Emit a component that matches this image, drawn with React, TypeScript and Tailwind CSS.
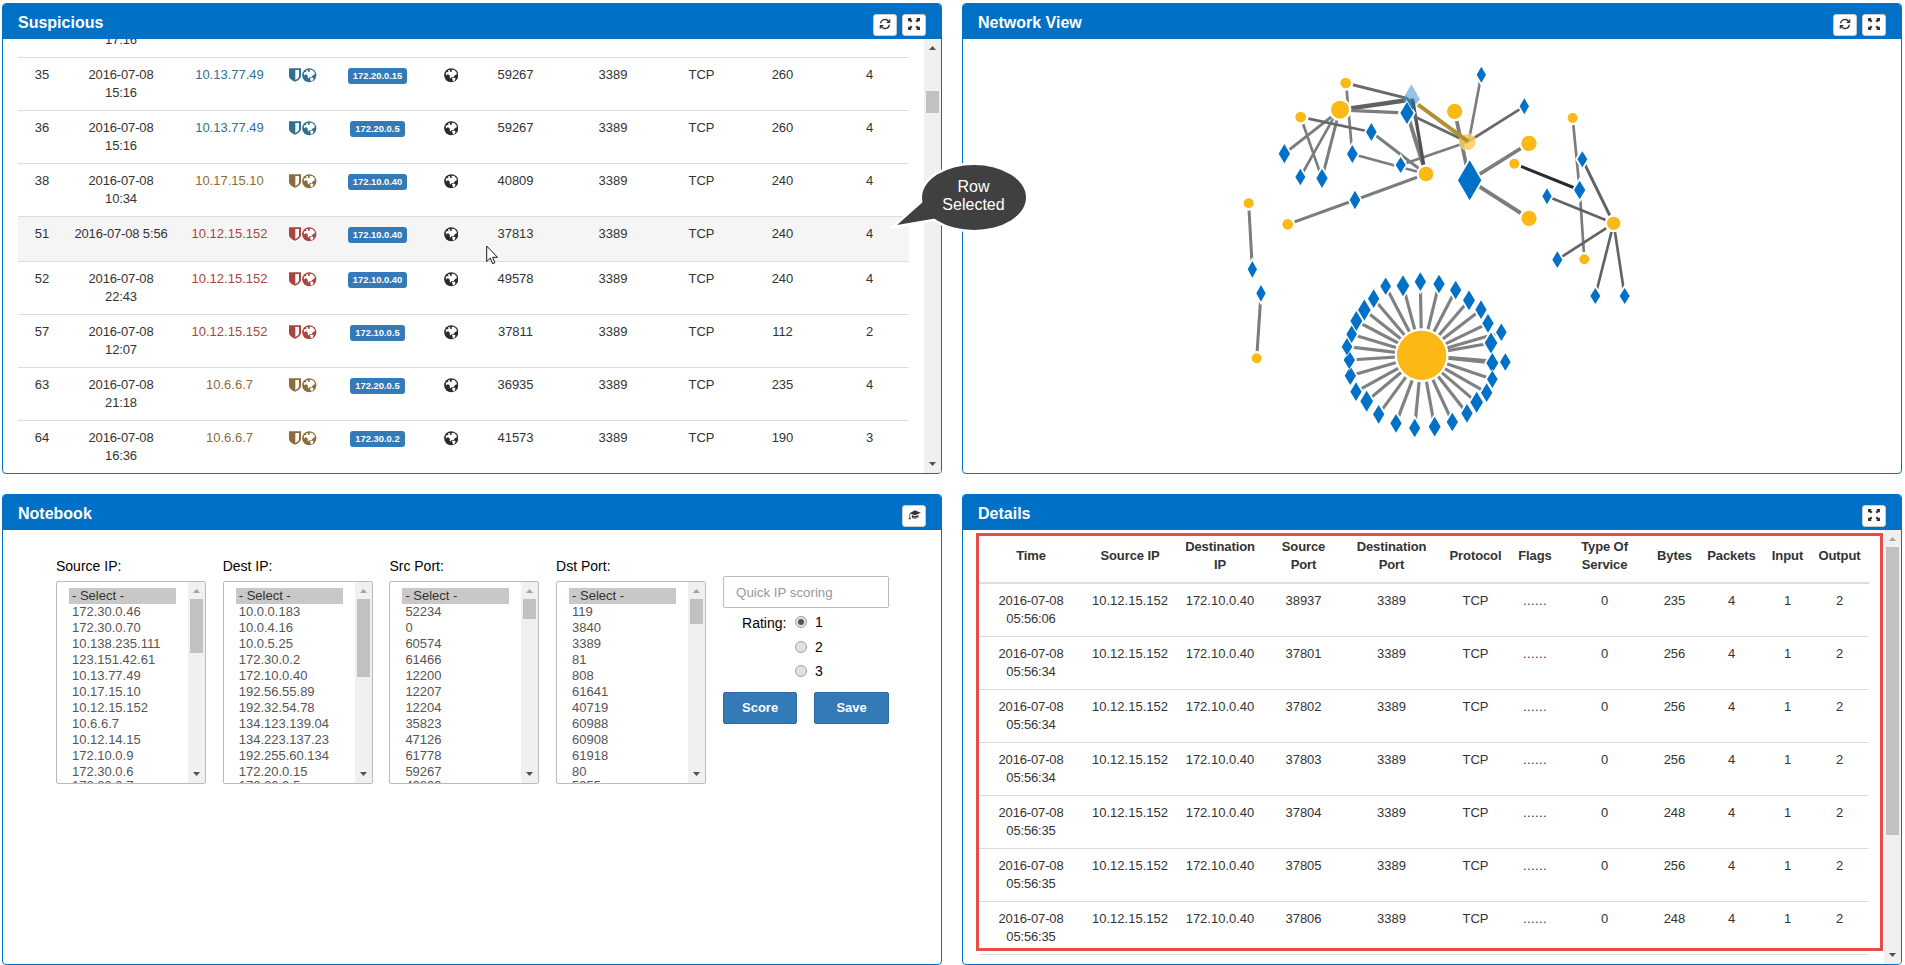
import React from "react";

function Globe({ cls }: { cls: string }) {
  return (
    <svg viewBox="0 0 44 44" className={`h-[14.5px] w-[14.5px] ${cls}`}>
      <circle cx="22" cy="22" r="21.5" fill="currentColor" />
      <path
        d="M13 6l5 1 1 5 5-1-1-6 8 1 7 7 1 6-5 2-5 6-7 1-1 4-4-3 1-5-4-4-4-1-2 4-3-5 3-6 5 1z M24 30l7-1 4 3-2 6-6 3-1-5z"
        fill="#fff"
      />
    </svg>
  );
}

function Shield({ cls }: { cls: string }) {
  return (
    <svg viewBox="0 0 36 42" className={`h-[14px] w-3 ${cls}`}>
      <path d="M0 1h36v23q0 10-18 17.500Q0 34 0 24z" fill="currentColor" />
      <path d="M19 6h11v18q0 7-11 12z" fill="#fff" />
    </svg>
  );
}

function RefreshIcon() {
  return (
    <svg viewBox="0 0 24 24" className="h-3 w-3" fill="none" stroke="#333" strokeWidth="2.700">
      <path d="M3 10.500A9.300 9.300 0 0 1 18.500 5.500" />
      <path d="M21 13.500A9.300 9.300 0 0 1 5.500 18.500" />
      <path d="M22.500 1.500v8.500h-8.500z" fill="#333" stroke="none" />
      <path d="M1.500 22.500v-8.500h8.500z" fill="#333" stroke="none" />
    </svg>
  );
}

function ExpandIcon() {
  return (
    <svg viewBox="0 0 24 24" className="h-3 w-3" fill="#333">
      <path d="M0 0h7.500L5.600 1.900 9 5.800 5.800 9 1.900 5.600 0 7.500z" />
      <path d="M24 0v7.500L22.100 5.600 18.200 9 15 5.800 18.400 1.900 16.500 0z" />
      <path d="M0 24v-7.500L1.900 18.400 5.800 15 9 18.200 5.600 22.100 7.500 24z" />
      <path d="M24 24h-7.500L18.400 22.100 15 18.200 18.200 15 22.100 18.400 24 16.500z" />
    </svg>
  );
}

function CapIcon() {
  return (
    <svg viewBox="0 0 38 30" className="h-[10px] w-[13px]" fill="#333">
      <path d="M20 1l18 7-17 8-13-5-2 3v7l2 7H1l3-7v-8l2-4z" />
      <path d="M11 15l10 4 10-4v7q-9 7-20 1zM14 20v2q7 3 14 0v-2l-7 3z" fillRule="evenodd" />
    </svg>
  );
}

function IconButton({ children }: { children: React.ReactNode }) {
  return (
    <button className="flex h-[22px] w-6 items-center justify-center rounded-[3px] border border-[#ccc] bg-white pb-0.5">
      {children}
    </button>
  );
}

function Panel({
  title,
  buttons,
  children,
}: {
  title: string;
  buttons: React.ReactNode;
  children: React.ReactNode;
}) {
  return (
    <section className="flex h-[471px] w-[940px] flex-col overflow-hidden rounded-[4px] border border-[#0071c6]">
      <header className="flex h-[35px] shrink-0 items-start justify-between bg-[#0071c6] pr-[15px] pl-[15px]">
        <h2 className="pt-[7px] text-base leading-6 font-bold text-white">{title}</h2>
        <div className="flex gap-[5px] pt-2.5">{buttons}</div>
      </header>
      <div className="flex min-h-0 flex-1">{children}</div>
    </section>
  );
}

function Arrow({ down, light }: { down?: boolean; light?: boolean }) {
  return (
    <svg viewBox="0 0 7 4" className="h-1 w-[7px] shrink-0" fill={light ? "#a3a3a3" : "#505050"}>
      <path d={down ? "M0 0h7L3.500 4z" : "M0 4h7L3.500 0z"} />
    </svg>
  );
}

function Scrollbar({ top, size, lightUp }: { top: number; size: number; lightUp?: boolean }) {
  return (
    <div className="flex w-[17px] shrink-0 flex-col items-center justify-between bg-[#f0f0f0] py-[7px]">
      <div className="flex flex-col items-center">
        <Arrow light={lightUp} />
        <div className="w-[13px] bg-[#c1c1c1]" style={{ marginTop: top, height: size }} />
      </div>
      <Arrow down />
    </div>
  );
}

type Tone = "blue" | "brown" | "red";
const toneClass: Record<Tone, string> = {
  blue: "text-[#31708f]",
  brown: "text-[#8a6d3b]",
  red: "text-[#a94442]",
};

type Alert = [string, string, string, string, Tone, string, string, string, string];
const alerts: Alert[] = [
  ["35", "2016-07-08", "15:16", "10.13.77.49", "blue", "172.20.0.15", "59267", "260", "4"],
  ["36", "2016-07-08", "15:16", "10.13.77.49", "blue", "172.20.0.5", "59267", "260", "4"],
  ["38", "2016-07-08", "10:34", "10.17.15.10", "brown", "172.10.0.40", "40809", "240", "4"],
  ["51", "2016-07-08 5:56", "", "10.12.15.152", "red", "172.10.0.40", "37813", "240", "4"],
  ["52", "2016-07-08", "22:43", "10.12.15.152", "red", "172.10.0.40", "49578", "240", "4"],
  ["57", "2016-07-08", "12:07", "10.12.15.152", "red", "172.10.0.5", "37811", "112", "2"],
  ["63", "2016-07-08", "21:18", "10.6.6.7", "brown", "172.20.0.5", "36935", "235", "4"],
  ["64", "2016-07-08", "16:36", "10.6.6.7", "brown", "172.30.0.2", "41573", "190", "3"],
];

function SuspiciousTable() {
  return (
    <div className="flex-1 overflow-hidden pl-[15px]">
      <div className="w-[891px] text-center text-[13px] leading-[18px] text-[#333]">
        <div className="h-[18px] pl-[45px]">
          <div className="w-[116px] leading-[2px] tracking-[-0.15px]">17:16</div>
        </div>
        {alerts.map(([id, date, time, ip, tone, dest, port, bytes, packets]) => (
          <div
            key={id}
            className={`grid grid-cols-[45px_116px_101px_46px_103px_44px_85px_110px_67px_95px_79px] border-t border-[#ddd] pt-2 ${
              id === "51" ? "h-[45px] bg-[#f5f5f5]" : "h-[53px]"
            }`}
          >
            <div className="pl-[3px]">{id}</div>
            <div className="tracking-[-0.15px]">
              {date}
              {time && <div>{time}</div>}
            </div>
            <div className={toneClass[tone]}>{ip}</div>
            <div className="flex items-start justify-center gap-px pt-0.5">
              <Shield cls={toneClass[tone]} />
              <Globe cls={toneClass[tone]} />
            </div>
            <div className="flex items-start justify-center pt-0.5">
              <span className="h-4 rounded-[3px] bg-[#337ab7] px-[5px] text-[9.400px] leading-4 font-bold text-white">
                {dest}
              </span>
            </div>
            <div className="flex items-start justify-center pt-0.5">
              <Globe cls="text-[#2b2b2b]" />
            </div>
            <div>{port}</div>
            <div>3389</div>
            <div>TCP</div>
            <div>{bytes}</div>
            <div>{packets}</div>
          </div>
        ))}
      </div>
    </div>
  );
}

const flows = [
  ["05:56:06", "38937", "235"],
  ["05:56:34", "37801", "256"],
  ["05:56:34", "37802", "256"],
  ["05:56:34", "37803", "256"],
  ["05:56:35", "37804", "248"],
  ["05:56:35", "37805", "256"],
  ["05:56:35", "37806", "248"],
];
const flowHeads = [
  "Time",
  "Source IP",
  "Destination\nIP",
  "Source\nPort",
  "Destination\nPort",
  "Protocol",
  "Flags",
  "Type Of\nService",
  "Bytes",
  "Packets",
  "Input",
  "Output",
];
const flowCols = "grid grid-cols-[104px_94px_86px_81px_95px_73px_46px_93px_47px_67px_45px_59px]";

function DetailsTable() {
  return (
    <div className="relative flex-1 overflow-hidden pl-4">
      <div className="w-[890px] text-center text-[13px] leading-[18px] text-[#333]">
        <div className={`${flowCols} h-[54px] items-center border-b-2 border-[#ddd] font-bold`}>
          {flowHeads.map((h) => (
            <div key={h} className="tracking-[-0.1px] whitespace-pre">
              {h}
            </div>
          ))}
        </div>
        {flows.map(([time, port, bytes]) => (
          <div key={port} className={`${flowCols} h-[53px] border-b border-[#ddd] pt-2`}>
            <div className="tracking-[-0.15px]">
              2016-07-08
              <div>{time}</div>
            </div>
            <div>10.12.15.152</div>
            <div>172.10.0.40</div>
            <div>{port}</div>
            <div>3389</div>
            <div>TCP</div>
            <div className="tracking-[0.4px]">......</div>
            <div>0</div>
            <div>{bytes}</div>
            <div>4</div>
            <div>1</div>
            <div>2</div>
          </div>
        ))}
      </div>
      <div className="absolute top-[3px] left-[13px] h-[418px] w-[907px] border-3 border-[#e94b47]" />
    </div>
  );
}

const lists: { label: string; thumb: number; items: string[] }[] = [
  {
    label: "Source IP:",
    thumb: 54,
    items: ["172.30.0.46", "172.30.0.70", "10.138.235.111", "123.151.42.61", "10.13.77.49", "10.17.15.10", "10.12.15.152", "10.6.6.7", "10.12.14.15", "172.10.0.9", "172.30.0.6", "172.30.0.7"],
  },
  {
    label: "Dest IP:",
    thumb: 78,
    items: ["10.0.0.183", "10.0.4.16", "10.0.5.25", "172.30.0.2", "172.10.0.40", "192.56.55.89", "192.32.54.78", "134.123.139.04", "134.223.137.23", "192.255.60.134", "172.20.0.15", "172.20.0.5"],
  },
  {
    label: "Src Port:",
    thumb: 20,
    items: ["52234", "0", "60574", "61466", "12200", "12207", "12204", "35823", "47126", "61778", "59267", "40809"],
  },
  {
    label: "Dst Port:",
    thumb: 25,
    items: ["119", "3840", "3389", "81", "808", "61641", "40719", "60988", "60908", "61918", "80", "5355"],
  },
];

function Notebook() {
  return (
    <div className="flex pl-[53px] text-sm text-black">
      <div className="flex gap-[16.700px] pt-[26px]">
        {lists.map(({ label, thumb, items }) => (
          <div key={label} className="w-[150px]">
            <div className="leading-5">{label}</div>
            <div className="mt-[5px] flex h-[203px] overflow-hidden rounded-[2px] border border-[#bbb]">
              <div className="flex-1 pt-1.5 pl-3 text-[13px] leading-4 text-[#555]">
                <div className="w-[107px] bg-[#c8c8c8] pl-[3px] text-[#333]">- Select -</div>
                {items.map((item) => (
                  <div key={item} className="pl-[3px] last:leading-[12px]">
                    {item}
                  </div>
                ))}
              </div>
              <Scrollbar top={6} size={thumb} lightUp />
            </div>
          </div>
        ))}
      </div>
      <div className="ml-[17px] w-[166px] pt-[46px]">
        <input
          placeholder="Quick IP scoring"
          className="block h-8 w-full rounded-[2px] border border-[#bbb] px-3 text-[13.300px] placeholder:text-[#999]"
        />
        <div className="flex h-[77px] pt-0.5 pl-[19px]">
          <span className="w-[53px] pt-[3px] leading-5">Rating:</span>
          <div>
            {["1", "2", "3"].map((n) => (
              <div key={n} className="flex h-[24.600px] items-center gap-2">
                <span className="flex h-3 w-3 items-center justify-center rounded-full border border-[#a0a0a0] bg-[#e0e0e0]">
                  {n === "1" && <span className="h-1.5 w-1.5 rounded-full bg-[#555]" />}
                </span>
                {n}
              </div>
            ))}
          </div>
        </div>
        <div className="flex justify-between pt-[7px] text-[13px] font-bold text-white">
          <button className="h-8 w-[74px] rounded-[2px] border border-[#2e6da4] bg-[#337ab7]">Score</button>
          <button className="h-8 w-[75px] rounded-[2px] border border-[#2e6da4] bg-[#337ab7]">Save</button>
        </div>
      </div>
    </div>
  );
}

// Graph coordinates are in thirds of a pixel.
const links: [number, number, number, number, number?, string?][] = [
  [347, 99, 535, 146, 9, "#68696c"],
  [355, 176, 535, 150, 13, "#5f6063"],
  [355, 181, 505, 188, 10],
  [350, 120, 367, 312, 8],
  [305, 200, 163, 311],
  [310, 205, 211, 381, 8],
  [322, 205, 276, 385],
  [212, 201, 276, 385, 8],
  [235, 206, 424, 246, 8, "#68696c"],
  [424, 246, 588, 372],
  [367, 312, 588, 372, 8],
  [588, 372, 375, 450],
  [375, 450, 173, 523],
  [512, 345, 713, 276, 8],
  [531, 189, 588, 372, 12],
  [548, 150, 582, 350, 10, "#505154"],
  [531, 189, 713, 276, 9, "#68696c"],
  [754, 74, 716, 276, 8],
  [883, 169, 713, 276, 8, "#68696c"],
  [674, 184, 719, 391, 11],
  [719, 391, 897, 280, 11],
  [719, 391, 897, 505, 12],
  [853, 341, 1049, 420, 9, "#292a2d"],
  [1028, 204, 1049, 420, 8],
  [1049, 420, 1063, 628, 8],
  [1057, 328, 1151, 520, 9, "#626366"],
  [951, 439, 1151, 520, 8, "#626366"],
  [982, 629, 1151, 520, 8, "#626366"],
  [1096, 738, 1151, 520, 8, "#626366"],
  [1184, 738, 1151, 520, 8, "#626366"],
  [56, 460, 67, 658, 9],
  [93, 730, 80, 925, 9],
];
const dots: [number, number, number][] = [
  [347, 99, 16],
  [330, 179, 27],
  [212, 201, 16],
  [674, 184, 23],
  [897, 280, 23],
  [853, 341, 15],
  [897, 505, 23],
  [588, 372, 22],
  [173, 523, 16],
  [56, 460, 15],
  [80, 925, 15],
  [1028, 204, 15],
  [1151, 520, 20],
  [1063, 628, 15],
  [575, 916, 74],
];
const gems: [number, number, number, number][] = [
  [754, 74, 14, 24],
  [883, 169, 14, 24],
  [531, 189, 20, 33],
  [424, 246, 16, 27],
  [163, 311, 17, 29],
  [367, 312, 16, 27],
  [211, 381, 15, 25],
  [276, 385, 17, 29],
  [512, 345, 15, 24],
  [375, 450, 16, 28],
  [719, 391, 35, 60],
  [1057, 328, 15, 24],
  [1049, 420, 17, 28],
  [951, 439, 14, 24],
  [982, 629, 15, 25],
  [1096, 738, 15, 24],
  [1184, 738, 15, 24],
  [67, 658, 14, 25],
  [93, 730, 14, 25],
];
const ring: [number, number, number][] = [
  [361, 65, 16],
  [417, 72, 16],
  [467, 90, 16],
  [507, 121, 17],
  [543, 149, 16],
  [564, 190, 16],
  [604, 217, 15],
  [573, 249, 18],
  [616, 306, 15],
  [577, 309, 17],
  [577, 358, 15],
  [560, 398, 16],
  [530, 427, 18],
  [501, 460, 16],
  [457, 486, 16],
  [404, 500, 17],
  [344, 504, 16],
  [288, 490, 16],
  [236, 463, 16],
  [200, 424, 18],
  [168, 395, 16],
  [151, 347, 16],
  [148, 300, 16],
  [141, 260, 15],
  [155, 223, 15],
  [169, 183, 17],
  [193, 150, 18],
  [221, 116, 16],
  [257, 79, 15],
  [309, 77, 18],
];
const ringGems = ring.map(([x, y, w]): [number, number, number, number] => [x + 210, y + 630, w + 1, w * 1.75]);
const allGems = [...gems, ...ringGems];
const gemPoints = ([x, y, w, h]: [number, number, number, number]) =>
  `${x},${y - h} ${x + w},${y} ${x},${y + h} ${x - w},${y}`;

function NetworkGraph() {
  return (
    <svg viewBox="963 39 938 434" className="h-[434px] w-[938px]">
      <g transform="translate(1230 50) scale(0.33333)">
        {links.map(([a, b, c, d, w = 9, color = "#7b7c7f"], i) => (
          <line key={i} x1={a} y1={b} x2={c} y2={d} stroke={color} strokeWidth={w} />
        ))}
        {ringGems.map(([x, y], i) => (
          <line key={i} x1={575} y1={916} x2={x} y2={y} stroke="#808184" strokeWidth={9.5} />
        ))}
        {dots.map(([x, y, r], i) => (
          <circle key={i} cx={x} cy={y} r={r + 7} fill="#fff" />
        ))}
        {allGems.map((g, i) => (
          <polygon key={i} points={gemPoints(g)} fill="#fff" stroke="#fff" strokeWidth={11} />
        ))}
        <polygon points="544,103 570,148 544,180 518,148" fill="#3b93d4" opacity={0.55} />
        <path d="M530 148l22-3 4 28-10 7z" fill="#24618f" opacity={0.75} />
        <circle cx={713} cy={276} r={27} fill="#fff" opacity={0.6} />
        <circle cx={713} cy={276} r={24} fill="#fcb814" opacity={0.6} />
        <line x1={564} y1={164} x2={714} y2={274} stroke="#b38f2f" strokeWidth={12} />
        {allGems.map((g, i) => (
          <polygon
            key={i}
            points={gemPoints(g)}
            fill="#0071c6"
            stroke="#fff"
            strokeWidth={4}
            style={{ paintOrder: "stroke" }}
          />
        ))}
        {dots.map(([x, y, r], i) => (
          <circle key={i} cx={x} cy={y} r={r} fill="#fcb814" />
        ))}
      </g>
    </svg>
  );
}

export default function App() {
  const refresh = (
    <IconButton>
      <RefreshIcon />
    </IconButton>
  );
  const expand = (
    <IconButton>
      <ExpandIcon />
    </IconButton>
  );
  return (
    <main className="relative h-[965px] w-[1905px] overflow-hidden bg-white pt-[3px] pl-0.5 font-['Liberation_Sans',Arial,sans-serif]">
      <div className="grid grid-cols-[940px_940px] gap-x-5 gap-y-5">
        <Panel title="Suspicious" buttons={<>{refresh}{expand}</>}>
          <SuspiciousTable />
          <Scrollbar top={41} size={22} />
        </Panel>
        <Panel title="Network View" buttons={<>{refresh}{expand}</>}>
          <NetworkGraph />
        </Panel>
        <Panel
          title="Notebook"
          buttons={
            <IconButton>
              <CapIcon />
            </IconButton>
          }
        >
          <Notebook />
        </Panel>
        <Panel title="Details" buttons={expand}>
          <DetailsTable />
          <Scrollbar top={6} size={288} lightUp />
        </Panel>
      </div>
      <svg viewBox="0 0 140 80" className="absolute top-[158px] left-[890px] h-20 w-[140px]">
        <g stroke="#fff" strokeWidth="5" fill="#fff">
          <ellipse cx="84" cy="39.500" rx="52" ry="32.500" />
          <path d="M7 67l27-24 14 17z" />
        </g>
        <g fill="#404040">
          <ellipse cx="84" cy="39.500" rx="52" ry="32.500" />
          <path d="M7 67l27-24 14 17z" />
        </g>
      </svg>
      <div className="absolute top-[178px] left-[922px] w-[103px] text-center text-base leading-[18px] text-white">
        Row
        <br />
        Selected
      </div>
      <svg viewBox="0 0 12 20" className="absolute top-[245px] left-[486px] h-5 w-3">
        <path d="M.7 1v15.500l3.600-3.400 2.300 5.600 2.300-1-2.300-5.400h4.900z" fill="#fff" stroke="#111827" strokeWidth="1" />
      </svg>
    </main>
  );
}
